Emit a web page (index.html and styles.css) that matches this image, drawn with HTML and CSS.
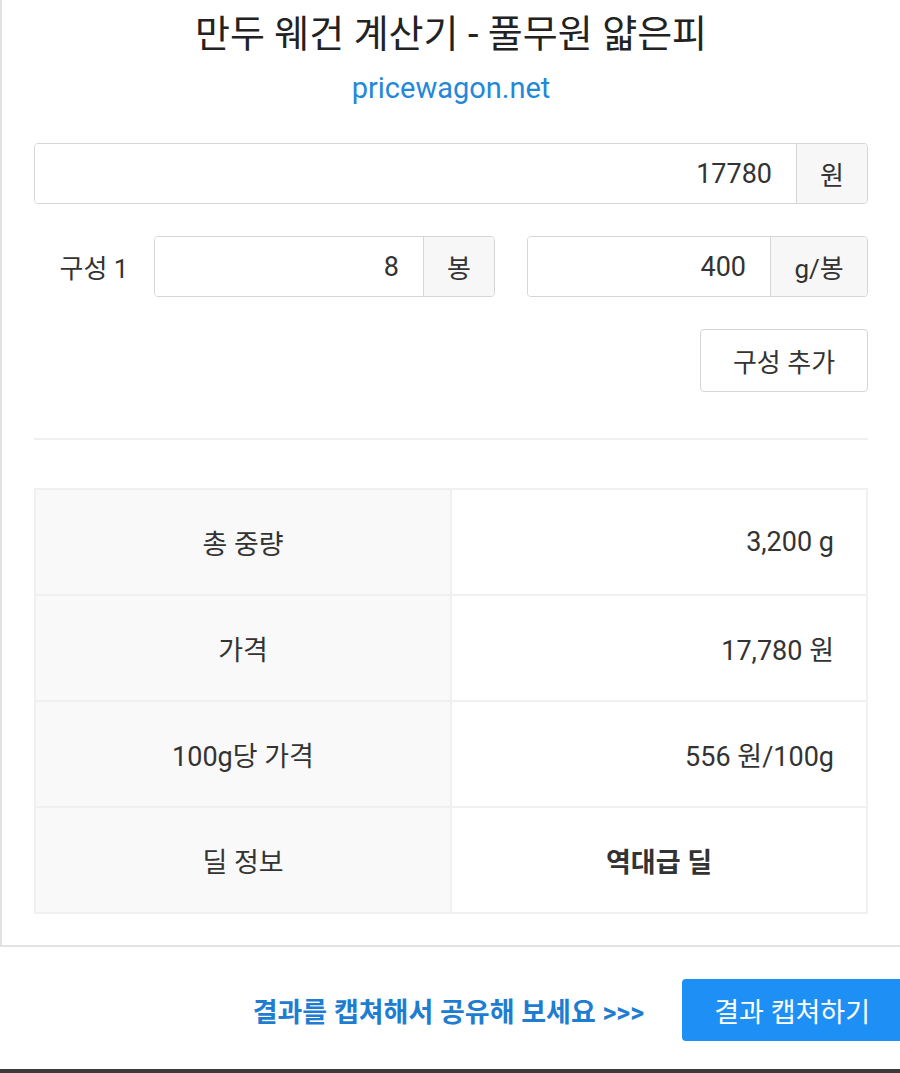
FILE: index.html
```html
<!DOCTYPE html>
<html lang="ko">
<head>
  <meta charset="UTF-8" />
  <meta name="viewport" content="width=device-width, initial-scale=1.0"/>
  <title>만두 웨건 계산기 - 풀무원 얇은피</title>
  <link rel="stylesheet" href="styles.css">
</head>
<body>
  <div class="page">
    <div class="calc-card">
      <h1 class="calc-title">만두 웨건 계산기 - 풀무원 얇은피</h1>
      <p class="site-link"><a href="#">pricewagon.net</a></p>

      <!-- 가격 -->
      <div class="input-group price-group">
        <input type="text" class="num-input" value="17780" />
        <span class="addon">원</span>
      </div>

      <!-- 구성 -->
      <div class="combo-row">
        <span class="combo-label">구성 1</span>
        <div class="input-group">
          <input type="text" class="num-input" value="8" />
          <span class="addon">봉</span>
        </div>
        <div class="input-group">
          <input type="text" class="num-input" value="400" />
          <span class="addon addon-wide">g/봉</span>
        </div>
      </div>

      <div class="add-row">
        <button class="add-btn">구성 추가</button>
      </div>

      <hr class="divider" />

      <!-- 결과 -->
      <table class="result-table">
        <tr>
          <th>총 중량</th>
          <td>3,200 g</td>
        </tr>
        <tr>
          <th>가격</th>
          <td>17,780 원</td>
        </tr>
        <tr>
          <th>100g당 가격</th>
          <td>556 원/100g</td>
        </tr>
        <tr>
          <th>딜 정보</th>
          <td class="deal">역대급 딜</td>
        </tr>
      </table>
    </div>

    <div class="share-row">
      <span class="share-text">결과를 캡쳐해서 공유해 보세요 &gt;&gt;&gt;</span>
      <button class="capture-btn">결과 캡쳐하기</button>
    </div>

    <div class="bottom-bar"></div>
  </div>
</body>
</html>
```

FILE: styles.css
```css
html, body {
  margin: 0;
  padding: 0;
  background-color: #fff;
  overflow: hidden;
}

body {
  font-family: 'Roboto', 'Noto Sans CJK KR', sans-serif;
  color: #333;
}

.page {
  width: 902px;
  height: 1073px;
  display: flex;
  flex-direction: column;
}

.calc-card {
  border-left: 2px solid #e2e2e2;
  border-bottom: 2px solid #e2e2e2;
  padding: 12px 34px 31px 32px;
}

.calc-title {
  margin: 0;
  font-size: 38px;
  font-weight: normal;
  line-height: 44px;
  text-align: center;
  color: #222;
}

.site-link {
  margin: 15px 0 0;
  font-size: 29px;
  line-height: 34px;
  text-align: center;
}

.site-link a {
  color: #2488d8;
  text-decoration: none;
}

.input-group {
  display: flex;
  height: 61px;
  border: 1px solid #d6d6d6;
  border-radius: 4px;
  box-sizing: border-box;
  overflow: hidden;
  flex: 1;
}

.price-group {
  margin-top: 38px;
}

.num-input {
  flex: 1;
  min-width: 0;
  border: none;
  outline: none;
  padding: 0 24px;
  font-family: inherit;
  font-size: 27px;
  color: #333;
  text-align: right;
  background: #fff;
}

.addon {
  width: 70px;
  display: flex;
  justify-content: center;
  align-items: center;
  background-color: #f7f7f7;
  border-left: 1px solid #d6d6d6;
  font-size: 26px;
  color: #333;
}

.addon-wide {
  width: 96px;
}

.combo-row {
  display: flex;
  align-items: center;
  margin-top: 32px;
}

.combo-label {
  width: 120px;
  text-align: center;
  font-size: 26px;
}

.combo-row .input-group + .input-group {
  margin-left: 32px;
}

.add-row {
  display: flex;
  justify-content: flex-end;
  margin-top: 32px;
}

.add-btn {
  width: 168px;
  height: 63px;
  background: #fff;
  border: 1px solid #d6d6d6;
  border-radius: 4px;
  font-family: inherit;
  font-size: 26px;
  color: #333;
}

.divider {
  border: none;
  border-top: 2px solid #efefef;
  margin: 46px 0 0;
}

.result-table {
  width: 100%;
  margin-top: 48px;
  border-collapse: collapse;
  border: 2px solid #f0f0f0;
  font-size: 27px;
}

.result-table th,
.result-table td {
  width: 50%;
  height: 104px;
  border: 2px solid #f0f0f0;
  padding: 0 32px;
}

.result-table th {
  background-color: #f9f9f9;
  font-weight: normal;
  text-align: center;
}

.result-table td {
  text-align: right;
}

.result-table td.deal {
  text-align: center;
  font-weight: bold;
}

.share-row {
  display: flex;
  justify-content: flex-end;
  align-items: center;
  margin-top: 32px;
  gap: 38px;
}

.share-text {
  font-size: 27px;
  font-weight: bold;
  color: #1f7dd1;
}

.capture-btn {
  height: 62px;
  padding: 0 32px;
  background-color: #1e90f5;
  border: none;
  border-radius: 4px 0 0 4px;
  font-family: inherit;
  font-size: 27px;
  color: #fff;
}

.bottom-bar {
  margin-top: auto;
  height: 4px;
  background-color: #3a3a3a;
}
```
